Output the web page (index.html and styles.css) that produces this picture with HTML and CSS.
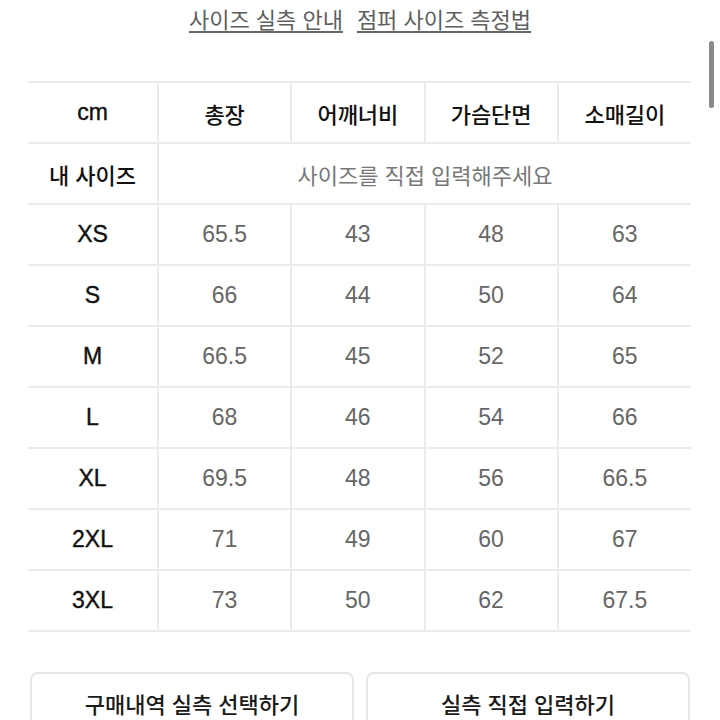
FILE: index.html
```html
<!DOCTYPE html>
<html lang="ko">
<head>
<meta charset="utf-8">
<title>사이즈 실측</title>
<link rel="stylesheet" href="styles.css">
</head>
<body>
<div class="page">
  <nav class="links">
    <a class="link" href="#">사이즈 실측 안내</a>
    <a class="link" href="#">점퍼 사이즈 측정법</a>
  </nav>

  <table class="size-table">
    <thead>
      <tr>
        <th class="label">cm</th>
        <th>총장</th>
        <th>어깨너비</th>
        <th>가슴단면</th>
        <th>소매길이</th>
      </tr>
    </thead>
    <tbody>
      <tr>
        <th class="label kr">내 사이즈</th>
        <td class="placeholder" colspan="4">사이즈를 직접 입력해주세요</td>
      </tr>
      <tr><th class="label">XS</th><td>65.5</td><td>43</td><td>48</td><td>63</td></tr>
      <tr><th class="label">S</th><td>66</td><td>44</td><td>50</td><td>64</td></tr>
      <tr><th class="label">M</th><td>66.5</td><td>45</td><td>52</td><td>65</td></tr>
      <tr><th class="label">L</th><td>68</td><td>46</td><td>54</td><td>66</td></tr>
      <tr><th class="label">XL</th><td>69.5</td><td>48</td><td>56</td><td>66.5</td></tr>
      <tr><th class="label">2XL</th><td>71</td><td>49</td><td>60</td><td>67</td></tr>
      <tr><th class="label">3XL</th><td>73</td><td>50</td><td>62</td><td>67.5</td></tr>
    </tbody>
  </table>

  <div class="actions">
    <button class="btn" type="button">구매내역 실측 선택하기</button>
    <button class="btn" type="button">실측 직접 입력하기</button>
  </div>

  <div class="scrollbar"></div>
</div>
</body>
</html>
```

FILE: styles.css
```css
* {
  box-sizing: border-box;
}

html, body {
  margin: 0;
  padding: 0;
  background: #ffffff;
}

body {
  font-family: "Liberation Sans", "Noto Sans CJK KR", sans-serif;
  color: #111;
  overflow: hidden;
}

.page {
  position: relative;
  width: 720px;
  height: 720px;
}

.links {
  display: flex;
  justify-content: center;
  gap: 14px;
  padding-top: 7px;
  height: 81px;
}

.link {
  font-size: 22px;
  line-height: 28px;
  color: #5e5e5e;
  text-decoration: underline;
  text-decoration-thickness: 2px;
  text-underline-offset: 3px;
  text-decoration-color: #666;
}

.size-table {
  border-collapse: collapse;
  margin-left: 28px;
  width: 663px;
  table-layout: fixed;
}

.size-table tr {
  height: 61px;
}

.size-table th,
.size-table td {
  border: 2px solid #ebebeb;
  text-align: center;
  vertical-align: middle;
  padding: 0;
}

.size-table tr > :first-child {
  border-left: none;
  width: 130px;
}

.size-table tr > :last-child {
  border-right: none;
}

.size-table thead th {
  font-size: 22px;
  font-weight: 500;
  color: #111;
}

.size-table th.label {
  font-size: 23px;
  font-weight: 400;
  color: #111;
  -webkit-text-stroke: 0.4px #111;
}

.size-table th.kr {
  font-size: 22px;
  font-weight: 500;
  -webkit-text-stroke: 0;
}

.size-table td {
  font-size: 23px;
  font-weight: 400;
  color: #666;
}

.size-table td.placeholder {
  font-size: 22px;
  color: #777;
}

.actions {
  display: flex;
  gap: 12px;
  padding: 0 30px;
  margin-top: 40px;
}

.btn {
  flex: 1;
  height: 62px;
  border: 2px solid #e6e6e6;
  border-radius: 8px;
  background: #fff;
  font-family: "Liberation Sans", "Noto Sans CJK KR", sans-serif;
  font-size: 22px;
  font-weight: 500;
  color: #1a1a1a;
  padding: 0;
}

.scrollbar {
  position: absolute;
  top: 41px;
  left: 709px;
  width: 5px;
  height: 67px;
  border-radius: 3px;
  background: #8a8a8a;
}
```
